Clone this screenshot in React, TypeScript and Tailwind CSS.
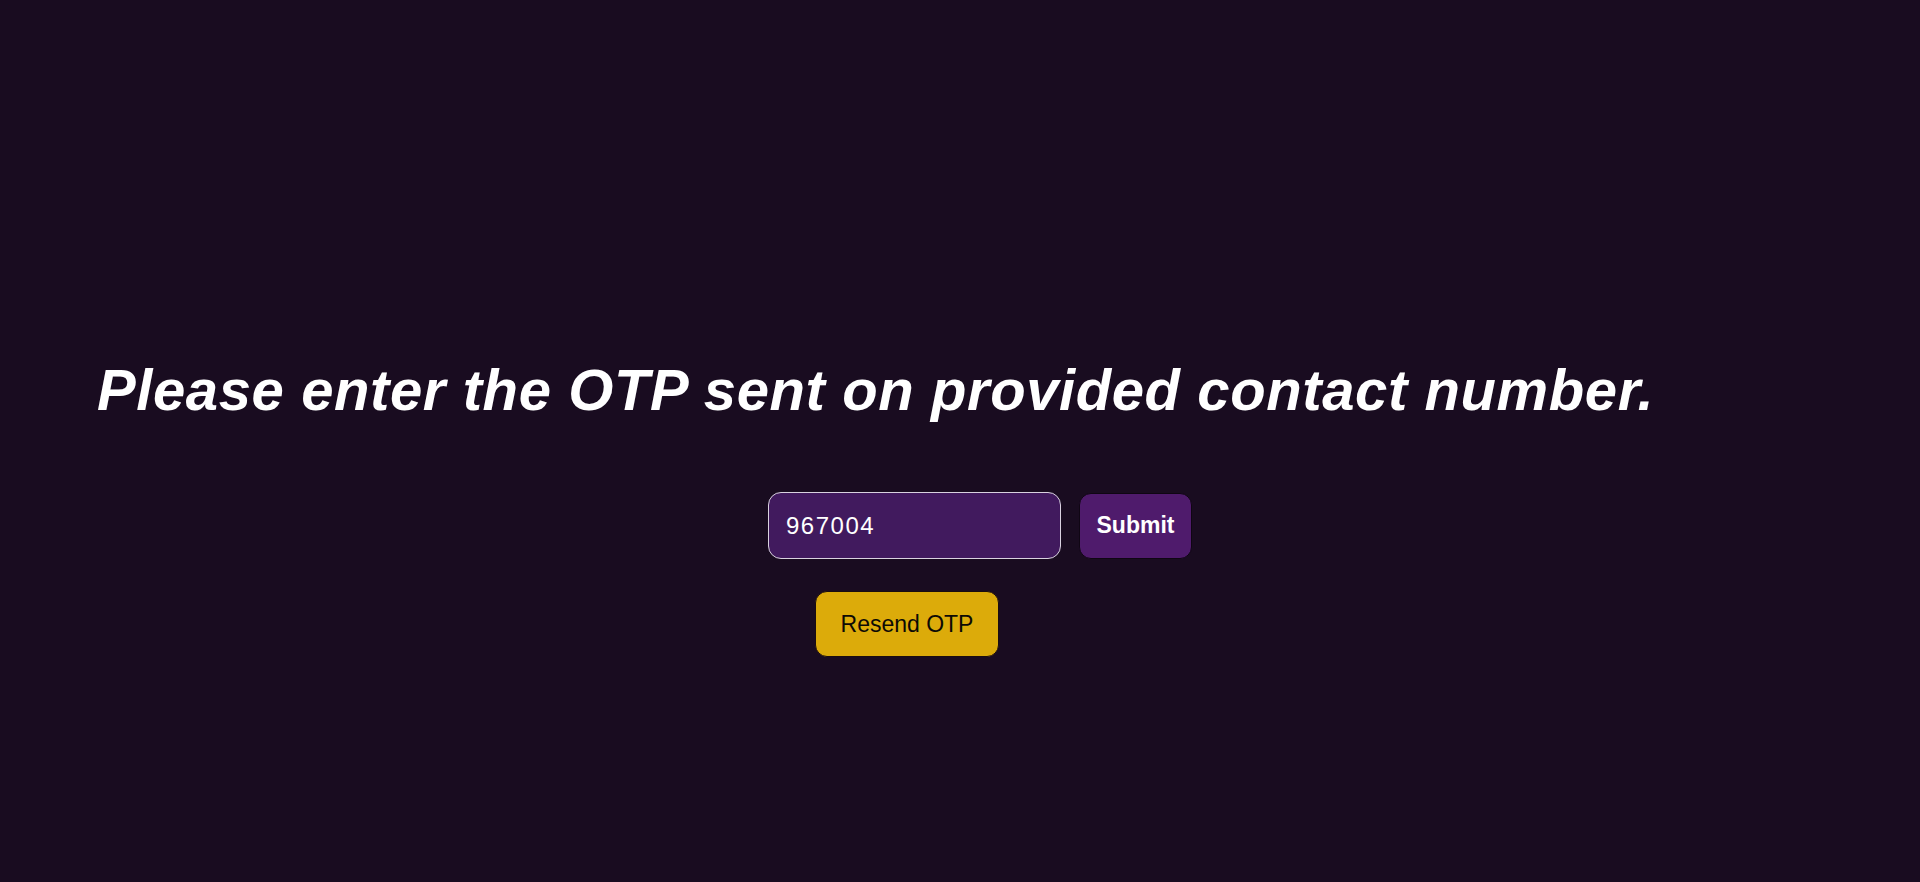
import React from "react";

export default function App() {
  return (
    <div
      className="w-full h-[882px] bg-[#190c20] overflow-hidden flex flex-col"
      style={{ fontFamily: '"Liberation Sans", Arial, sans-serif' }}
    >
      <h1 className="mt-[356px] ml-[97px] text-white font-bold italic text-[58px] leading-[67px] tracking-[0.6px] whitespace-nowrap">
        Please enter the OTP sent on provided contact number.
      </h1>
      <div className="mt-[69px] ml-[768px] flex items-center gap-[18px]">
        <input
          readOnly
          value="967004"
          className="w-[293px] h-[67px] rounded-[13px] border border-[#d9d2e0] bg-[#411a5e] px-[17px] text-[24px] tracking-[1.5px] text-white outline-none"
        />
        <button className="h-[66px] w-[113px] rounded-[12px] border border-[#0f0613] bg-[#4f1b6c] text-white font-bold text-[23px]">
          Submit
        </button>
      </div>
      <div className="mt-[32px] ml-[815px]">
        <button className="h-[66px] w-[184px] rounded-[12px] border border-[#1a0d10] bg-[#dcab0a] text-[#0d0a05] text-[23px]">
          Resend OTP
        </button>
      </div>
    </div>
  );
}
